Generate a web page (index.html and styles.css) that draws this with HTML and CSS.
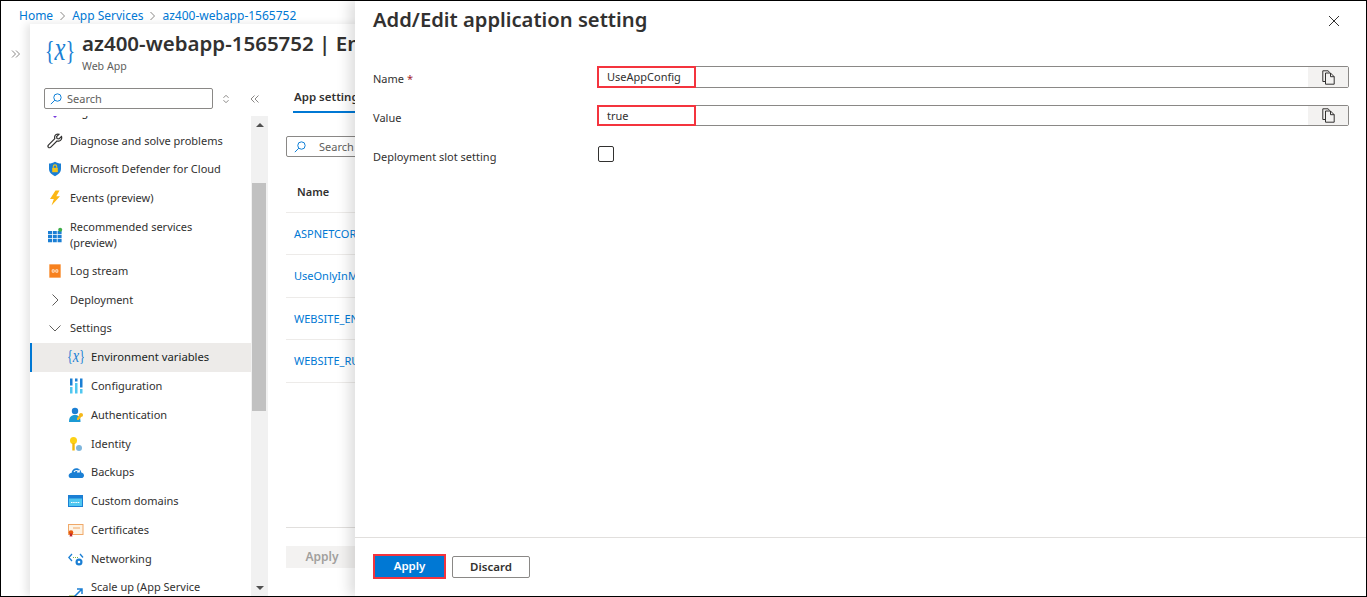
FILE: index.html
```html
<!DOCTYPE html>
<html lang="en">
<head>
<meta charset="utf-8">
<title>Add/Edit application setting</title>
<link rel="stylesheet" href="styles.css">
</head>
<body>
<div class="frame">
  <nav class="crumbs">
    <a>Home</a><svg class="sep" viewBox="0 0 7 10"><path d="M1.500 1l4 4-4 4"/></svg>
    <a>App Services</a><svg class="sep" viewBox="0 0 7 10"><path d="M1.500 1l4 4-4 4"/></svg>
    <a>az400-webapp-1565752</a>
  </nav>
  <div class="work">
    <div class="rail"><svg class="rail-ico" viewBox="0 0 10 10"><path d="M1 1.500l3.500 3.500L1 8.500M5 1.500L8.500 5 5 8.500"/></svg></div>
    <div class="blade">
      <header class="head">
        <svg class="head-ico" viewBox="0 0 28 28"><text transform="translate(14 21) scale(.8 1.08)" text-anchor="middle" class="x-glyph">{<tspan class="x-i">x</tspan>}</text></svg>
        <div>
          <h1 class="head-title">az400-webapp-1565752 | Environment variables</h1>
          <div class="head-sub">Web App</div>
        </div>
      </header>
      <div class="body">
        <aside class="side">
          <div class="side-tools">
            <div class="side-search">
              <svg class="mag" viewBox="0 0 14 14"><circle cx="8.700" cy="5.300" r="4.300"/><path d="M5.600 8.400L1 13"/></svg>
              <span>Search</span>
            </div>
            <svg class="updown" viewBox="0 0 8 10"><path d="M1.500 3.800L4 1.300l2.500 2.500M1.500 6.200L4 8.700l2.500-2.500"/></svg>
            <svg class="collapse" viewBox="0 0 10 10"><path d="M4.500 1.500L1 5l3.500 3.500M8.500 1.500L5 5l3.500 3.500"/></svg>
          </div>
          <div class="side-scrollwrap">
            <ul class="menu">
              <li class="item"><svg class="ico" viewBox="0 0 16 16"><path fill="#773adc" d="M2 2h6l6 6-6 6-6-6z"/></svg><span>Tags</span></li>
              <li class="item"><svg class="ico" viewBox="0 0 16 16"><path fill="none" stroke="#323130" stroke-width="1.200" d="M14.500 3.500l-2.600 2.400-1.900-.4-.4-1.900L12 1.200c-2-.7-4.200.6-4.400 2.800 0 .7 0 1.100.2 1.600L1.600 11.900c-.8.800-.8 1.700-.2 2.400.7.700 1.600.6 2.400-.2L10 8c.6.200 1.200.2 1.800.1 2.200-.4 3.400-2.500 2.700-4.600z"/></svg><span>Diagnose and solve problems</span></li>
              <li class="item"><svg class="ico" viewBox="0 0 16 16"><path fill="#1b7fd4" d="M8 .8c2 1.300 3.800 1.700 6 1.800v5.200c0 3.400-2.600 5.900-6 7.400-3.400-1.500-6-4-6-7.400V2.600C4.200 2.500 6 2.100 8 .8z"/><rect x="5.200" y="6.800" width="5.600" height="4.400" fill="#f5c518"/><path fill="none" stroke="#f5c518" stroke-width="1.100" d="M6.300 6.800V5.600a1.700 1.700 0 013.400 0v1.200"/></svg><span>Microsoft Defender for Cloud</span></li>
              <li class="item"><svg class="ico" viewBox="0 0 16 16"><path fill="#fcb714" d="M8.500 .5L3 9h3.800L4.500 15.500 13 6.300H9.300L12.500 .5z"/></svg><span>Events (preview)</span></li>
              <li class="item tall"><svg class="ico" viewBox="0 0 16 16"><path fill="#1b7fd4" d="M1 4h4v3.300H1zM5.800 4h4v3.300h-4zM10.600 4h4v3.300h-4zM1 8h4v3.300H1zM5.800 8h4v3.300h-4zM10.600 8h4v3.300h-4zM1 12h4v3.300H1zM5.800 12h4v3.300h-4zM10.600 12h4v3.300h-4z"/><circle cx="13.200" cy="2.800" r="2" fill="#3fae49"/></svg><span>Recommended services<br>(preview)</span></li>
              <li class="item"><svg class="ico" viewBox="0 0 16 16"><rect x="2" y="1" width="12" height="14" rx="1" fill="#fbb77c"/><rect x="2.800" y="1.800" width="10.400" height="12.400" fill="#f7811e"/><path fill="none" stroke="#ffe3c8" stroke-width="1" d="M5.200 6.800h2v2.400h-2zM8.800 6.800h2v2.400h-2z"/></svg><span>Log stream</span></li>
              <li class="item"><svg class="ico chev" viewBox="0 0 12 12"><path d="M3.500 .5L9 6l-5.500 5.500"/></svg><span>Deployment</span></li>
              <li class="item"><svg class="ico chev" viewBox="0 0 12 12"><path d="M.5 3.500L6 9l5.500-5.500"/></svg><span>Settings</span></li>
              <li class="item sub active"><svg class="ico" viewBox="0 0 16 16"><text transform="translate(8 13) scale(.8 1.08)" text-anchor="middle" class="x-small">{<tspan class="x-i">x</tspan>}</text></svg><span>Environment variables</span></li>
              <li class="item sub"><svg class="ico" viewBox="0 0 16 16"><path fill="#1b7fd4" d="M2 .5h2.500v7H2zM7 .5h2.500v3H7zM12 .5h2.500v9H12z"/><path fill="#50c7f0" d="M2 9h2.500v6.500H2zM7 5h2.500v10.500H7zM12 11h2.500v4.500H12z"/></svg><span>Configuration</span></li>
              <li class="item sub"><svg class="ico" viewBox="0 0 16 16"><circle cx="7" cy="4" r="3.200" fill="#1b7fd4"/><path fill="#1b9ad4" d="M1 15c0-5 2-7 6-7s5.500 2 5.500 7z"/><path fill="#f5b81a" d="M13 6a2 2 0 00-1.900 2.600L9 11v2h2v-1h1l1-1.900A2 2 0 0013 6z"/></svg><span>Authentication</span></li>
              <li class="item sub"><svg class="ico" viewBox="0 0 16 16"><circle cx="5.500" cy="4.500" r="3.500" fill="#fcd116"/><path fill="#f0b70e" d="M4.300 7h2.400v7.500H4.300z"/><circle cx="11" cy="12" r="3" fill="#7fb6dc"/></svg><span>Identity</span></li>
              <li class="item sub"><svg class="ico" viewBox="0 0 16 16"><path fill="#1b7fd4" d="M1 13c-1-2 .5-4 2.500-4 .5-3.500 3.500-5.500 6.500-4.500 2 .7 3 2.200 3.300 4 1.700.3 2.700 1.500 2.700 2.900 0 1.500-1 2.600-2.700 2.600H3c-1 0-1.600-.4-2-1z"/><path fill="none" stroke="#fff" stroke-width="1.200" d="M6 8c1-2 4-2 5 0M11.200 5.800V8H9"/></svg><span>Backups</span></li>
              <li class="item sub"><svg class="ico" viewBox="0 0 16 16"><rect y="2" width="15" height="12" fill="#1b7fd4"/><rect x="1" y="5.500" width="13" height="7.500" fill="#50c7f0"/><path stroke="#fff" stroke-width="1" d="M3 9.500h9" stroke-dasharray="1.500 .7"/></svg><span>Custom domains</span></li>
              <li class="item sub"><svg class="ico" viewBox="0 0 16 16"><rect x=".500" y="2.500" width="14.500" height="10" fill="#fdf3e4" stroke="#f0a868"/><path stroke="#f0a868" d="M5 6h7"/><circle cx="3" cy="10.500" r="2.300" fill="#e8590c"/><path fill="#c0272d" d="M1.800 11.500h2.400V15L3 14l-1.200 1z"/></svg><span>Certificates</span></li>
              <li class="item sub"><svg class="ico" viewBox="0 0 16 16"><path fill="none" stroke="#1b7fd4" stroke-width="1.300" d="M4 3L.8 6.500 4 10M12 3l3 3.500"/><path stroke="#7ab648" stroke-dasharray="1 1" d="M5 6.500h6"/><circle cx="11" cy="11" r="3.500" fill="#1b7fd4"/><circle cx="11" cy="11" r="1.300" fill="#fff"/></svg><span>Networking</span></li>
              <li class="item sub tall"><svg class="ico" viewBox="0 0 16 16"><path fill="#c5d98f" d="M1 8h7v7H1z"/><path fill="none" stroke="#1b7fd4" stroke-width="1.500" d="M6 10l8-8M9 2h5v5"/></svg><span>Scale up (App Service<br>plan)</span></li>
            </ul>
            <div class="scrollbar">
              <span class="arrow up"></span>
              <div class="thumb"></div>
              <span class="arrow down"></span>
            </div>
          </div>
        </aside>
        <main class="content">
          <div class="tabs"><span class="tab">App settings</span></div>
          <div class="filter">
            <svg class="mag" viewBox="0 0 14 14"><circle cx="8.700" cy="5.300" r="4.300"/><path d="M5.600 8.400L1 13"/></svg>
            <span>Search to filter items...</span>
          </div>
          <div class="table">
            <div class="th">Name</div>
            <div class="td"><a>ASPNETCORE_ENVIRONMENT</a></div>
            <div class="td"><a>UseOnlyInMemoryDatabase</a></div>
            <div class="td"><a>WEBSITE_ENABLE_SYNC</a></div>
            <div class="td"><a>WEBSITE_RUN_FROM_PACKAGE</a></div>
          </div>
          <div class="content-foot"><button class="btn-disabled" type="button">Apply</button></div>
        </main>
      </div>
    </div>
  </div>
  <section class="panel">
    <div class="panel-head">
      <h2 class="panel-title">Add/Edit application setting</h2>
      <svg class="close" viewBox="0 0 12 12"><path d="M1 1l10 10M11 1L1 11"/></svg>
    </div>
    <div class="form">
      <div class="field">
        <label class="lab">Name <span class="req">*</span></label>
        <div class="input"><span class="val mark">UseAppConfig</span><span class="copy"><svg class="copy-ico" viewBox="0 0 13 15"><path d="M3.500 11.500H.8V.8h5.400l1.300 1.700M3.500 3h5l3.700 3.700v7.500H3.500zM8.500 3v3.700h3.700"/></svg></span></div>
      </div>
      <div class="field">
        <label class="lab">Value</label>
        <div class="input short"><span class="val mark">true</span><span class="copy"><svg class="copy-ico" viewBox="0 0 13 15"><path d="M3.500 11.500H.8V.8h5.400l1.300 1.700M3.500 3h5l3.700 3.700v7.500H3.500zM8.500 3v3.700h3.700"/></svg></span></div>
      </div>
      <div class="field">
        <label class="lab">Deployment slot setting</label>
        <span class="check"></span>
      </div>
    </div>
    <div class="panel-foot">
      <button class="btn primary" type="button">Apply</button>
      <button class="btn secondary" type="button">Discard</button>
    </div>
  </section>
</div>
</body>
</html>
```
FILE: styles.css
```css
*, *::before, *::after { box-sizing: border-box; }
html, body { margin: 0; height: 100%; overflow: hidden; background: #fff; }
body { font-family: "Noto Sans", "Open Sans", sans-serif; font-size: 11px; color: #323130; }
a { color: #0078d4; text-decoration: none; }
ul { list-style: none; margin: 0; padding: 0; }
h1, h2 { margin: 0; }

.frame { position: relative; width: 1367px; height: 597px; border: 1px solid #000; display: flex; flex-direction: column; overflow: hidden; }

.crumbs { height: 23px; padding: 7px 0 0 18px; display: flex; align-items: flex-start; gap: 6px; font-size: 12px; line-height: 16px; flex: none; }
.sep { width: 7px; height: 10px; margin-top: 3px; fill: none; stroke: #8a8886; stroke-width: 1; }

.work { flex: 1; display: flex; min-height: 0; }
.rail { width: 29px; flex: none; padding: 25px 0 0 10px; }
.rail-ico { width: 10px; height: 10px; display: block; fill: none; stroke: #8a8886; stroke-width: 1; }
.blade { flex: 1; display: flex; flex-direction: column; min-width: 0; box-shadow: -4px 0 8px rgba(0,0,0,.1); }

.head { height: 64px; flex: none; display: flex; padding: 3px 0 0 15px; gap: 7px; white-space: nowrap; overflow: hidden; }
.head-ico { width: 30px; height: 30px; margin-top: 10px; flex: none; }
.x-glyph { font-family: "Liberation Serif", serif; font-size: 24px; fill: #1b7fd4; }
.x-small { font-family: "Liberation Serif", serif; font-size: 15px; fill: #1b7fd4; }
.x-i { font-style: italic; font-size: 1.200em; }
.head-title { font-size: 20.500px; font-weight: 600; line-height: 28px; margin-top: 2px; }
.head-sub { font-size: 10.600px; line-height: 14px; color: #605e5c; margin-top: 2px; }

.body { flex: 1; display: flex; min-height: 0; }
.side { width: 238px; flex: none; display: flex; flex-direction: column; min-height: 0; }
.side-tools { height: 28px; flex: none; padding-left: 14px; display: flex; align-items: flex-start; }
.side-search { width: 169px; height: 21px; border: 1px solid #8a8886; border-radius: 2px; display: flex; align-items: center; padding-left: 5px; gap: 5px; color: #605e5c; }
.mag { width: 12px; height: 12px; fill: none; stroke: #0078d4; stroke-width: 1.100; flex: none; }
.updown { width: 8px; height: 10px; margin: 6px 0 0 9px; fill: none; stroke: #8a8886; stroke-width: 1; }
.collapse { width: 10px; height: 10px; margin: 6px 0 0 20px; fill: none; stroke: #8a8886; stroke-width: 1; }

.side-scrollwrap { flex: 1; min-height: 0; display: flex; overflow: hidden; }
.menu { flex: 1; margin-top: -18.700px; min-width: 0; }
.item { height: 28.800px; display: flex; align-items: center; padding-left: 17px; gap: 7px; line-height: 16px; white-space: nowrap; }
.item.tall { height: 44px; }
.item.sub { padding-left: 38px; gap: 7px; }
.item.active { background: #edebe9; box-shadow: inset 2px 0 0 #0078d4; color: #201f1e; font-size: 11.250px; }
.ico { width: 16px; height: 16px; flex: none; }
.chev { width: 12px; height: 12px; margin: 0 2px; fill: none; stroke: #605e5c; stroke-width: 1; }

.scrollbar { width: 17px; flex: none; background: #f1f1f1; position: relative; display: flex; flex-direction: column; }
.thumb { position: absolute; top: 67px; left: 1px; width: 14px; height: 228px; background: #c1c1c1; }
.arrow { height: 17px; flex: none; display: flex; align-items: center; justify-content: center; }
.arrow.down { margin-top: auto; }
.arrow::before { content: ""; border-left: 4px solid transparent; border-right: 4px solid transparent; }
.arrow.up::before { border-bottom: 4px solid #505050; }
.arrow.down::before { border-top: 4px solid #505050; }

.content { flex: 1; min-width: 0; padding-left: 18px; display: flex; flex-direction: column; }
.tabs { height: 28px; flex: none; }
.tab { display: block; width: 70px; height: 26px; margin-left: 7px; padding-left: 1px; margin-top: -1px; line-height: 20px; font-size: 11.500px; font-weight: 600; border-bottom: 2px solid #0078d4; color: #323130; white-space: nowrap; overflow: hidden; }
.filter { margin-top: 20px; width: 300px; height: 21px; border: 1px solid #8a8886; border-radius: 2px; display: flex; align-items: center; padding-left: 7px; gap: 13px; color: #605e5c; flex: none; }
.table { margin-top: 15px; width: 400px; flex: none; }
.th { height: 41px; line-height: 40px; font-weight: 600; padding-left: 11px; border-bottom: 1px solid #edebe9; }
.td { height: 42.400px; line-height: 42px; padding-left: 8px; border-bottom: 1px solid #edebe9; white-space: nowrap; }
.content-foot { margin-top: auto; height: 69px; border-top: 1px solid #e1dfdd; padding-top: 18px; flex: none; }
.btn-disabled { width: 72px; height: 22px; border: 0; background: #f3f2f1; color: #a19f9d; font: 600 12px "Noto Sans", sans-serif; padding: 0 0 2px; }

.panel { position: absolute; left: 354px; top: -1px; right: 0; bottom: 0; background: #fff; box-shadow: -6px 0 12px rgba(0,0,0,.13); display: flex; flex-direction: column; }
.panel-head { height: 66px; flex: none; display: flex; justify-content: space-between; padding: 5px 26px 0 18px; }
.panel-title { font-size: 20.200px; font-weight: 600; line-height: 28px; color: #323130; }
.close { width: 12px; height: 12px; margin-top: 10px; fill: none; stroke: #323130; stroke-width: 1; }
.form { flex: 1; padding-left: 18px; }
.field { display: flex; height: 39px; align-items: flex-start; }
.lab { width: 224px; flex: none; margin-top: 5px; line-height: 16px; }
.req { color: #a4262c; }
.input { width: 752px; height: 22px; border: 1px solid #8a8886; border-radius: 2px; display: flex; }
.input.short { height: 21px; }
.val { flex: 1; padding-left: 9px; line-height: 19px; }
.mark { position: relative; }
.mark::after { content: ""; position: absolute; left: -1px; top: -1px; bottom: -1px; width: 99px; border: 2px solid #f4343e; }
.copy { width: 40px; background: #f3f2f1; display: flex; align-items: center; justify-content: center; }
.copy-ico { width: 13px; height: 15px; fill: none; stroke: #323130; stroke-width: 1; }
.check { width: 16px; height: 16px; border: 1px solid #323130; border-radius: 2px; margin: 2px 0 0 1px; }

.panel-foot { height: 59px; flex: none; border-top: 1px solid #e1dfdd; padding: 18px 0 0 18px; display: flex; align-items: flex-start; gap: 6px; }
.btn { height: 22px; font: 600 11.500px "Noto Sans", sans-serif; border-radius: 2px; padding: 0 0 2px; }
.primary { width: 73px; height: 25px; background: #0078d4; color: #fff; border: 2px solid #f4343e; border-radius: 0; margin-top: -2px; }
.secondary { width: 78px; background: #fff; color: #323130; border: 1px solid #8a8886; }
```
